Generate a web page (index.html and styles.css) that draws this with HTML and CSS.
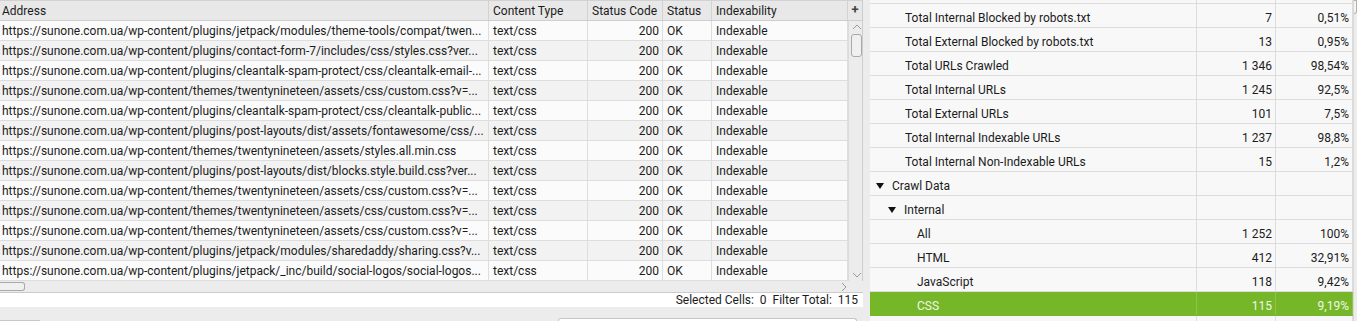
FILE: index.html
```html
<!DOCTYPE html>
<html lang="en">
  <head>
    <meta charset="UTF-8" />
    <title>Crawl Overview - CSS</title>
    <link rel="stylesheet" href="styles.css">
  </head>
  <body>
    <div class="left-pane">
      <div class="table-area">
        <div class="url-table">
          <div class="row head">
            <div class="cell">Address</div>
            <div class="cell">Content Type</div>
            <div class="cell">Status Code</div>
            <div class="cell">Status</div>
            <div class="cell">Indexability</div>
          </div>
          <div class="row">
            <div class="cell">https://sunone.com.ua/wp-content/plugins/jetpack/modules/theme-tools/compat/twen...</div>
            <div class="cell">text/css</div>
            <div class="cell num">200</div>
            <div class="cell">OK</div>
            <div class="cell">Indexable</div>
          </div>
          <div class="row">
            <div class="cell">https://sunone.com.ua/wp-content/plugins/contact-form-7/includes/css/styles.css?ver...</div>
            <div class="cell">text/css</div>
            <div class="cell num">200</div>
            <div class="cell">OK</div>
            <div class="cell">Indexable</div>
          </div>
          <div class="row">
            <div class="cell">https://sunone.com.ua/wp-content/plugins/cleantalk-spam-protect/css/cleantalk-email-...</div>
            <div class="cell">text/css</div>
            <div class="cell num">200</div>
            <div class="cell">OK</div>
            <div class="cell">Indexable</div>
          </div>
          <div class="row">
            <div class="cell">https://sunone.com.ua/wp-content/themes/twentynineteen/assets/css/custom.css?v=...</div>
            <div class="cell">text/css</div>
            <div class="cell num">200</div>
            <div class="cell">OK</div>
            <div class="cell">Indexable</div>
          </div>
          <div class="row">
            <div class="cell">https://sunone.com.ua/wp-content/plugins/cleantalk-spam-protect/css/cleantalk-public...</div>
            <div class="cell">text/css</div>
            <div class="cell num">200</div>
            <div class="cell">OK</div>
            <div class="cell">Indexable</div>
          </div>
          <div class="row">
            <div class="cell">https://sunone.com.ua/wp-content/plugins/post-layouts/dist/assets/fontawesome/css/...</div>
            <div class="cell">text/css</div>
            <div class="cell num">200</div>
            <div class="cell">OK</div>
            <div class="cell">Indexable</div>
          </div>
          <div class="row">
            <div class="cell">https://sunone.com.ua/wp-content/themes/twentynineteen/assets/styles.all.min.css</div>
            <div class="cell">text/css</div>
            <div class="cell num">200</div>
            <div class="cell">OK</div>
            <div class="cell">Indexable</div>
          </div>
          <div class="row">
            <div class="cell">https://sunone.com.ua/wp-content/plugins/post-layouts/dist/blocks.style.build.css?ver...</div>
            <div class="cell">text/css</div>
            <div class="cell num">200</div>
            <div class="cell">OK</div>
            <div class="cell">Indexable</div>
          </div>
          <div class="row">
            <div class="cell">https://sunone.com.ua/wp-content/themes/twentynineteen/assets/css/custom.css?v=...</div>
            <div class="cell">text/css</div>
            <div class="cell num">200</div>
            <div class="cell">OK</div>
            <div class="cell">Indexable</div>
          </div>
          <div class="row">
            <div class="cell">https://sunone.com.ua/wp-content/themes/twentynineteen/assets/css/custom.css?v=...</div>
            <div class="cell">text/css</div>
            <div class="cell num">200</div>
            <div class="cell">OK</div>
            <div class="cell">Indexable</div>
          </div>
          <div class="row">
            <div class="cell">https://sunone.com.ua/wp-content/themes/twentynineteen/assets/css/custom.css?v=...</div>
            <div class="cell">text/css</div>
            <div class="cell num">200</div>
            <div class="cell">OK</div>
            <div class="cell">Indexable</div>
          </div>
          <div class="row">
            <div class="cell">https://sunone.com.ua/wp-content/plugins/jetpack/modules/sharedaddy/sharing.css?v...</div>
            <div class="cell">text/css</div>
            <div class="cell num">200</div>
            <div class="cell">OK</div>
            <div class="cell">Indexable</div>
          </div>
          <div class="row">
            <div class="cell">https://sunone.com.ua/wp-content/plugins/jetpack/_inc/build/social-logos/social-logos...</div>
            <div class="cell">text/css</div>
            <div class="cell num">200</div>
            <div class="cell">OK</div>
            <div class="cell">Indexable</div>
          </div>
        </div>
        <div class="vscroll">
          <div class="plus">+</div>
          <div class="vtrack">
            <svg class="chev" width="10" height="6" viewBox="0 0 10 6"><path d="M1 5 L5 1 L9 5" fill="none" stroke="#9a9a9a" stroke-width="1"/></svg>
            <div class="vthumb"></div>
            <div class="vspace"></div>
            <svg class="chev" width="10" height="6" viewBox="0 0 10 6"><path d="M1 1 L5 5 L9 1" fill="none" stroke="#9a9a9a" stroke-width="1"/></svg>
          </div>
        </div>
      </div>
      <div class="hscroll">
        <div class="hthumb"></div>
        <svg class="chev-r" width="6" height="10" viewBox="0 0 6 10"><path d="M1 1 L5 5 L1 9" fill="none" stroke="#9a9a9a" stroke-width="1"/></svg>
      </div>
      <div class="status-bar">Selected Cells:&nbsp; 0&nbsp; Filter Total:&nbsp; 115</div>
      <div class="bottom-strip">
        <div class="stub"></div>
        <div class="field"></div>
      </div>
    </div>

    <div class="splitter"></div>

    <div class="right-pane">
      <div class="overview">
        <div class="orow partial">
          <div class="ocell"></div><div class="ocell"></div><div class="ocell"></div>
        </div>
        <div class="orow">
          <div class="ocell label">Total Internal Blocked by robots.txt</div>
          <div class="ocell num">7</div>
          <div class="ocell num">0,51%</div>
        </div>
        <div class="orow">
          <div class="ocell label">Total External Blocked by robots.txt</div>
          <div class="ocell num">13</div>
          <div class="ocell num">0,95%</div>
        </div>
        <div class="orow">
          <div class="ocell label">Total URLs Crawled</div>
          <div class="ocell num">1 346</div>
          <div class="ocell num">98,54%</div>
        </div>
        <div class="orow">
          <div class="ocell label">Total Internal URLs</div>
          <div class="ocell num">1 245</div>
          <div class="ocell num">92,5%</div>
        </div>
        <div class="orow">
          <div class="ocell label">Total External URLs</div>
          <div class="ocell num">101</div>
          <div class="ocell num">7,5%</div>
        </div>
        <div class="orow">
          <div class="ocell label">Total Internal Indexable URLs</div>
          <div class="ocell num">1 237</div>
          <div class="ocell num">98,8%</div>
        </div>
        <div class="orow">
          <div class="ocell label">Total Internal Non-Indexable URLs</div>
          <div class="ocell num">15</div>
          <div class="ocell num">1,2%</div>
        </div>
        <div class="orow">
          <div class="ocell group"><span class="tri"></span>Crawl Data</div>
          <div class="ocell"></div>
          <div class="ocell"></div>
        </div>
        <div class="orow">
          <div class="ocell subgroup"><span class="tri"></span>Internal</div>
          <div class="ocell"></div>
          <div class="ocell"></div>
        </div>
        <div class="orow">
          <div class="ocell leaf">All</div>
          <div class="ocell num">1 252</div>
          <div class="ocell num">100%</div>
        </div>
        <div class="orow">
          <div class="ocell leaf">HTML</div>
          <div class="ocell num">412</div>
          <div class="ocell num">32,91%</div>
        </div>
        <div class="orow">
          <div class="ocell leaf">JavaScript</div>
          <div class="ocell num">118</div>
          <div class="ocell num">9,42%</div>
        </div>
        <div class="orow selected">
          <div class="ocell leaf">CSS</div>
          <div class="ocell num">115</div>
          <div class="ocell num">9,19%</div>
        </div>
        <div class="orow">
          <div class="ocell"></div><div class="ocell"></div><div class="ocell"></div>
        </div>
      </div>
      <div class="rscroll">
        <div class="rthumb"></div>
      </div>
    </div>
  </body>
</html>
```

FILE: styles.css
```css
body {
  margin: 0;
  width: 1357px;
  height: 321px;
  overflow: hidden;
  display: flex;
  font-family: "Roboto", "Liberation Sans", sans-serif;
  font-size: 12px;
  color: #1b1b1b;
  background-color: #ececec;
}

/* Left pane: URL table */
.left-pane {
  width: 863px;
  height: 321px;
  display: flex;
  flex-direction: column;
  flex-shrink: 0;
}

.table-area {
  display: flex;
  height: 281px;
  flex-shrink: 0;
}

.url-table {
  width: 848px;
  background: #fbfbfb;
  overflow: hidden;
}

.row {
  display: grid;
  grid-template-columns: 489px 99px 75px 49px 136px;
  height: 19px;
  border-bottom: 1px solid #dedede;
}

.row:nth-child(odd) {
  background: #f2f2f2;
}

.row.head {
  background: #e8e8e8;
  border-top: 1px solid #d2d2d2;
  height: 19px;
  border-bottom-color: #cfcfcf;
}

.cell {
  border-right: 1px solid #dedede;
  padding: 0 3px 0 2px;
  line-height: 20px;
  white-space: nowrap;
  overflow: hidden;
  text-overflow: ellipsis;
}

.row.head .cell {
  line-height: 20px;
  border-right-color: #d2d2d2;
}

.cell:nth-child(n + 2) {
  padding-left: 4px;
}

.cell.num {
  text-align: right;
}

.vscroll {
  width: 15px;
  display: flex;
  flex-direction: column;
  border-right: 1px solid #cdcdcd;
  box-sizing: border-box;
}

.plus {
  height: 21px;
  flex-shrink: 0;
  background: #e8e8e8;
  border-top: 1px solid #d2d2d2;
  border-bottom: 1px solid #cfcfcf;
  box-sizing: border-box;
  text-align: center;
  font-weight: 700;
  font-size: 13px;
  line-height: 18px;
  color: #444;
}

.vtrack {
  flex: 1;
  display: flex;
  flex-direction: column;
  align-items: center;
  padding: 3px 0 3px 2px;
  border-left: 1px solid #dcdcdc;
}

.vthumb {
  width: 9px;
  height: 21px;
  margin-top: 4px;
  border: 1px solid #a9a9a9;
  border-radius: 3px;
  background: #f0f0f0;
}

.vspace {
  flex: 1;
}

.hscroll {
  height: 11px;
  flex-shrink: 0;
  display: flex;
  align-items: center;
  justify-content: space-between;
  padding-right: 16px;
  border-bottom: 1px solid #cbcbcb;
}

.hthumb {
  width: 24px;
  height: 7px;
  border: 1px solid #a9a9a9;
  border-left: none;
  border-radius: 0 3px 3px 0;
  background: #f0f0f0;
}

.status-bar {
  height: 14px;
  flex-shrink: 0;
  background: #fff;
  text-align: right;
  padding-right: 5px;
  line-height: 15px;
  white-space: nowrap;
}

.bottom-strip {
  flex: 1;
  display: flex;
  align-items: flex-end;
  justify-content: space-between;
  padding-right: 6px;
}

.stub {
  width: 40px;
  height: 1px;
  background: #c8c8c8;
}

.field {
  width: 297px;
  height: 2px;
  border: 1px solid #c6c6c6;
  border-bottom: none;
  border-radius: 3px 3px 0 0;
  background: #fff;
}

.splitter {
  width: 7px;
  flex-shrink: 0;
  background: #ececec;
}

/* Right pane: crawl overview */
.right-pane {
  width: 487px;
  height: 321px;
  display: flex;
  overflow: hidden;
}

.overview {
  width: 483px;
  background: #f8f8f8;
}

.orow {
  display: grid;
  grid-template-columns: 327px 79px 77px;
  height: 23px;
  border-bottom: 1px solid #dcdcdc;
}

.orow.partial {
  height: 3px;
}

.ocell {
  border-right: 1px solid #dcdcdc;
  line-height: 24px;
  padding: 2px 3px 0;
  white-space: nowrap;
  overflow: hidden;
}

.ocell.num {
  text-align: right;
}

.ocell.label {
  padding-left: 35px;
}

.ocell.group {
  padding-left: 6px;
}

.ocell.subgroup {
  padding-left: 18px;
}

.ocell.leaf {
  padding-left: 47px;
}

.tri {
  display: inline-block;
  width: 0;
  height: 0;
  border-left: 4px solid transparent;
  border-right: 4px solid transparent;
  border-top: 6px solid #111;
  margin-right: 8px;
  vertical-align: 1px;
}

.orow.selected {
  background: #76b72a;
  color: #eef7e4;
  border-bottom-color: #76b72a;
}

.orow.selected .ocell {
  border-right-color: #8cc44c;
}

.rscroll {
  width: 4px;
  background: #ececec;
  border-left: 1px solid #d8d8d8;
}

.rthumb {
  height: 12px;
  border: 1px solid #b0b0b0;
  border-left: none;
  border-radius: 0 0 3px 0;
  background: #f4f4f4;
}
```
